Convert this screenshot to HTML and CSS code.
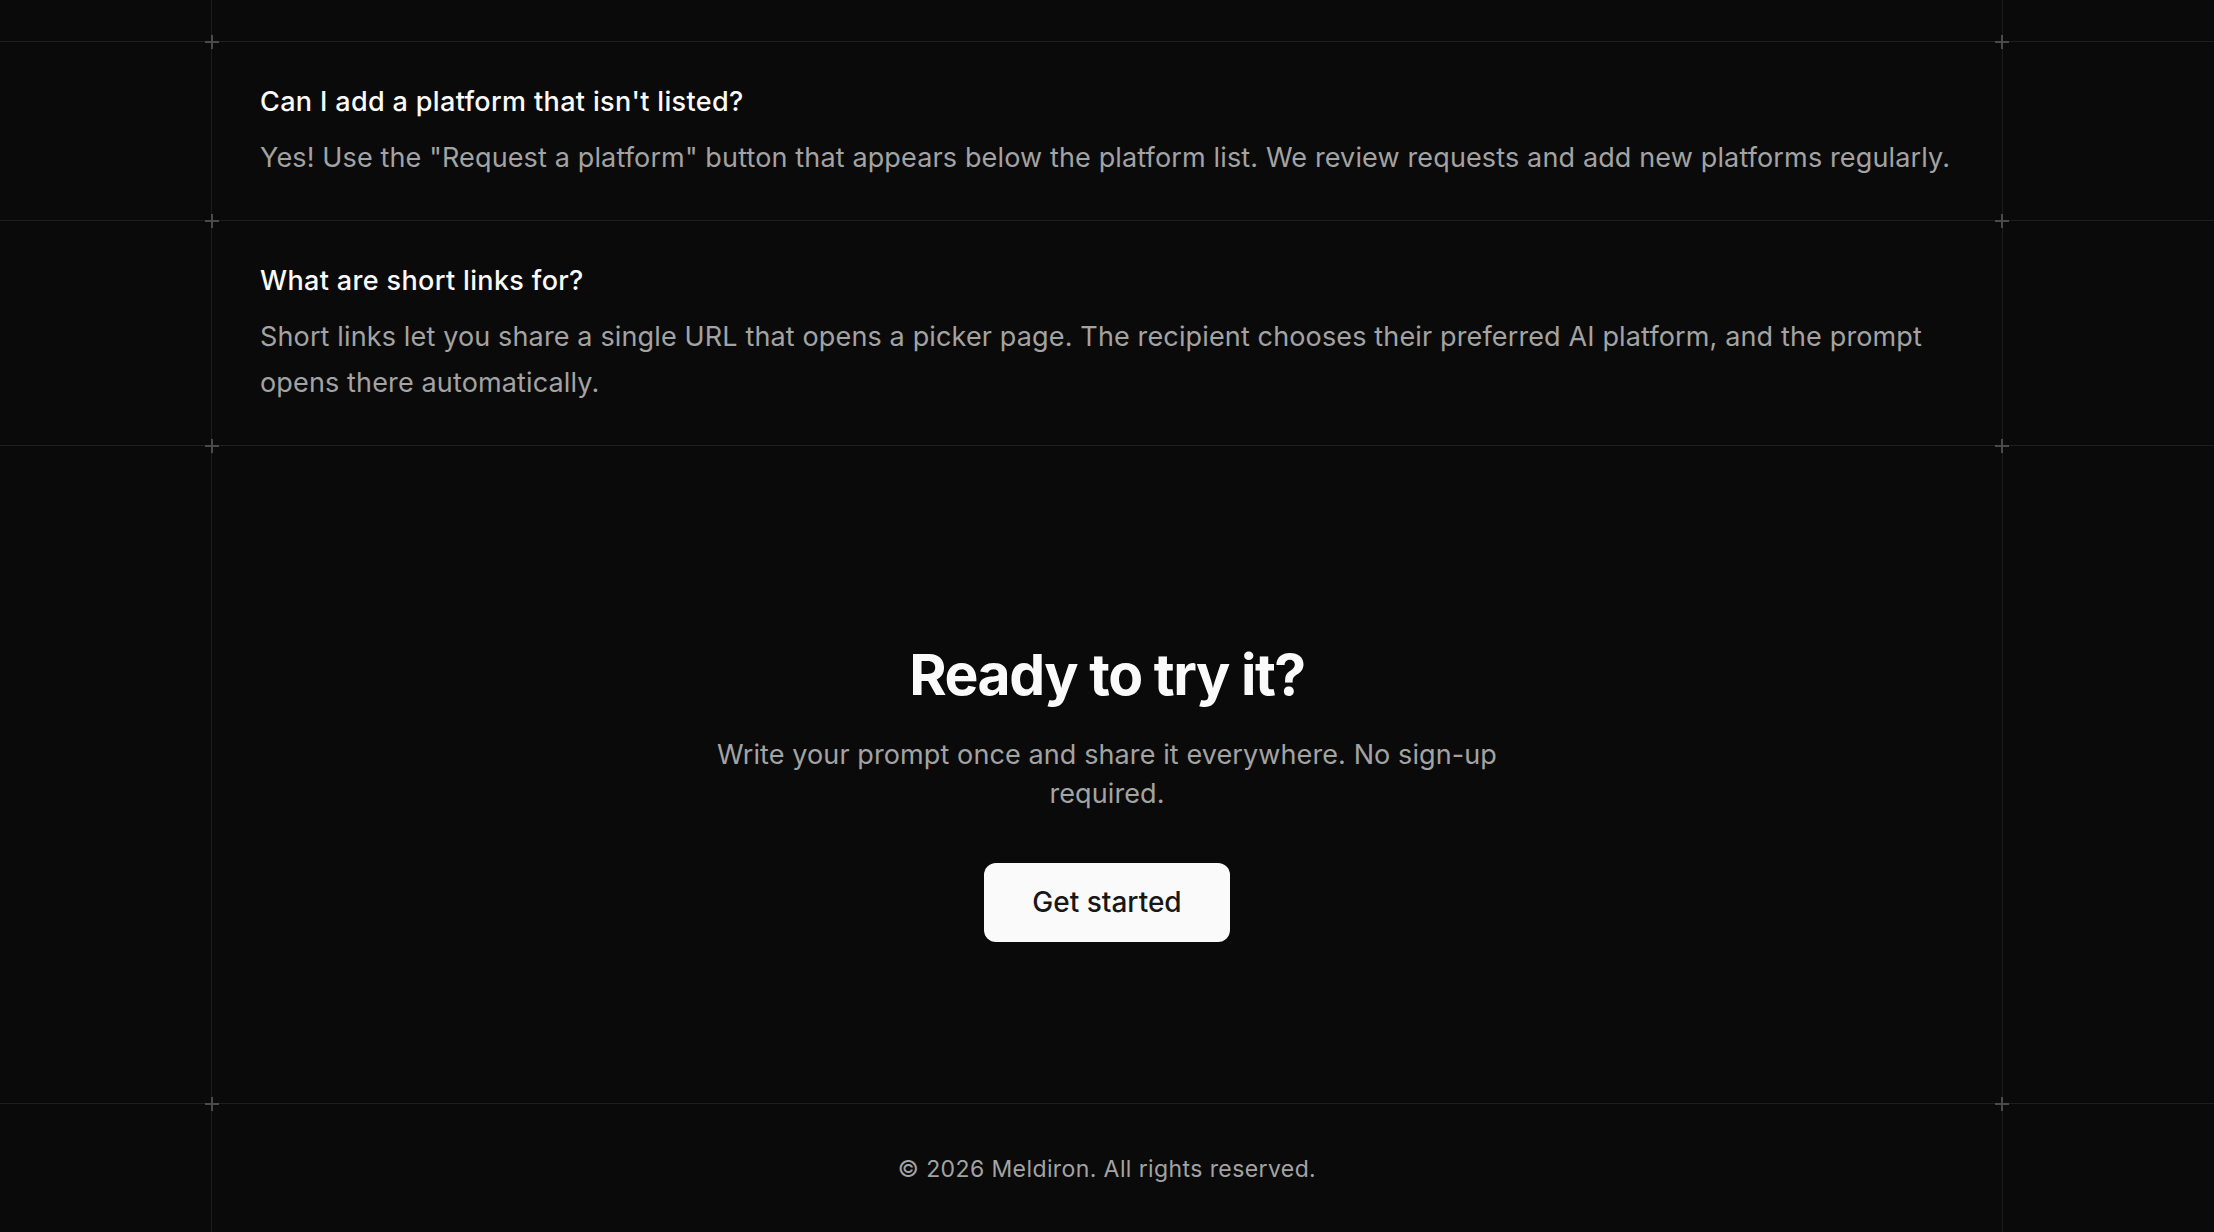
FILE: index.html
```html
<!DOCTYPE html>
<html lang="en">
<head>
    <meta charset="UTF-8">
    <meta name="viewport" content="width=device-width, initial-scale=1.0">
    <title>Meldiron - Ready to try it?</title>
    <link rel="stylesheet" href="styles.css">
</head>
<body>
    <!-- end of the faq list (previous item is cut off) -->
    <div class="row row-top">
        <div class="wrap spill"></div>
    </div>

    <div class="row">
        <div class="wrap faq-item">
            <h3 class="question">Can I add a platform that isn't listed?</h3>
            <p class="answer">Yes! Use the "Request a platform" button that appears below the platform list. We review requests and add new platforms regularly.</p>
        </div>
    </div>

    <div class="row">
        <div class="wrap faq-item">
            <h3 class="question">What are short links for?</h3>
            <p class="answer">Short links let you share a single URL that opens a picker page. The recipient chooses their preferred AI platform, and the prompt opens there automatically.</p>
        </div>
    </div>

    <!-- call to action -->
    <section class="row">
        <div class="wrap cta">
            <h2 class="cta-title">Ready to try it?</h2>
            <p class="cta-text">Write your prompt once and share it everywhere. No sign-up required.</p>
            <a class="cta-button" href="#">Get started</a>
        </div>
    </section>

    <footer class="row">
        <div class="wrap site-footer">
            <p>&copy; 2026 Meldiron. All rights reserved.</p>
        </div>
    </footer>
</body>
</html>
```
FILE: styles.css
```css
/* page */
* {
    box-sizing: border-box;
}

body {
    margin: 0;
    background: #0a0a0a;
    color: #fafafa;
    font-family: Inter, "Noto Sans", sans-serif;
}

/* grid lines */
.row {
    border-top: 1px solid #1f1f1f;
}

.row-top {
    border-top: none;
}

.wrap {
    position: relative;
    width: 1792px;
    margin: 0 auto;
    border-left: 1px solid #1c1c1c;
    border-right: 1px solid #1c1c1c;
}

/* little plus marks where the lines cross */
.row .wrap::before,
.row .wrap::after {
    content: "";
    position: absolute;
    top: -7px;
    width: 14px;
    height: 14px;
    background:
        linear-gradient(#4a4a4a, #4a4a4a) center / 14px 2px no-repeat,
        linear-gradient(#4a4a4a, #4a4a4a) center / 2px 14px no-repeat;
}

.row .wrap::before {
    left: -7px;
}

.row .wrap::after {
    right: -7px;
}

.row-top .wrap::before,
.row-top .wrap::after {
    display: none;
}

.spill {
    height: 41px;
}

/* faq */
.faq-item {
    padding: 39px 48px;
}

.question {
    margin: 0;
    font-size: 27px;
    line-height: 42px;
    font-weight: 500;
    letter-spacing: 0.35px;
    color: #fafafa;
}

.answer {
    margin: 12px 0 0;
    font-size: 27px;
    line-height: 46px;
    letter-spacing: 0.14px;
    color: #a3a3a3;
}

/* call to action */
.cta {
    padding: 199px 48px 161px;
    display: flex;
    flex-direction: column;
    align-items: center;
    text-align: center;
}

.cta-title {
    margin: 0;
    font-size: 57px;
    line-height: 60px;
    font-weight: 700;
    letter-spacing: -0.025em;
    color: #fafafa;
}

.cta-text {
    margin: 30px 0 0;
    max-width: 864px;
    font-size: 27px;
    line-height: 39px;
    letter-spacing: 0.1px;
    color: #a3a3a3;
}

.cta-button {
    margin-top: 50px;
    padding: 18px 48px;
    font-size: 28px;
    line-height: 43px;
    font-weight: 500;
    color: #171717;
    background: #fafafa;
    border-radius: 12px;
    text-decoration: none;
}

/* footer */
.site-footer {
    padding: 49px 48px 47px;
    text-align: center;
}

.site-footer p {
    margin: 0;
    font-size: 23px;
    line-height: 32px;
    letter-spacing: 0.4px;
    color: #a3a3a3;
}
```
